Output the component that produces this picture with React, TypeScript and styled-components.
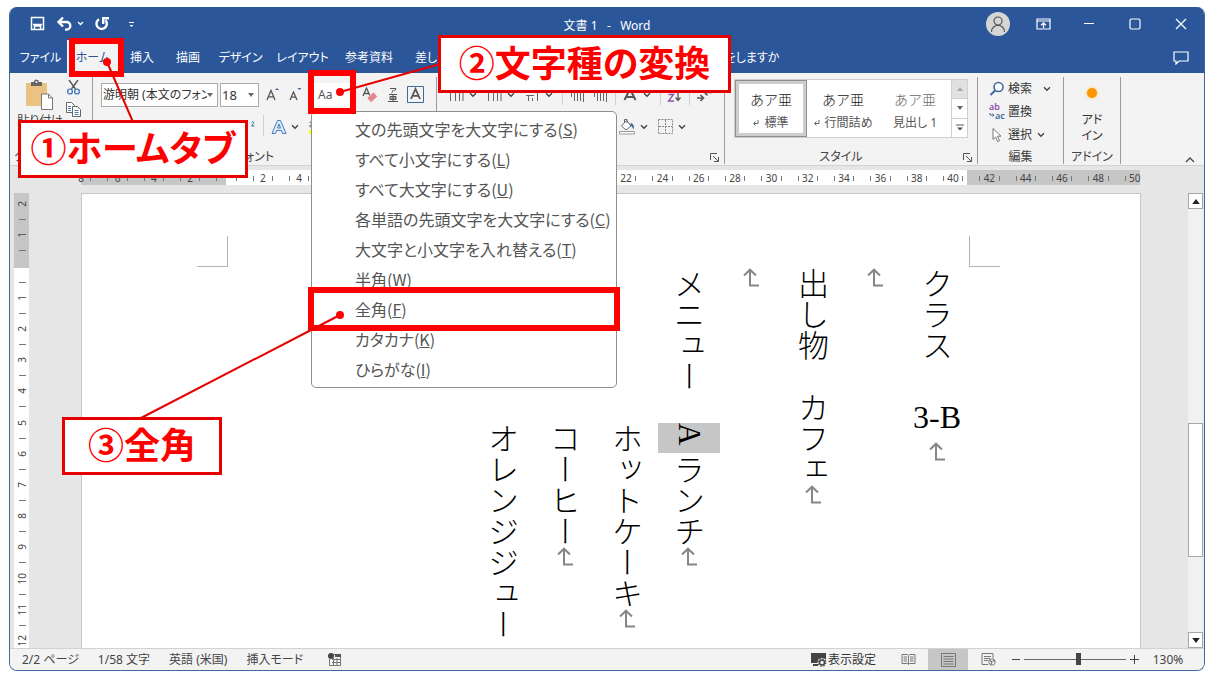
import React from "react";
import styled, { createGlobalStyle, css } from "styled-components";

const uiFont = `"Noto Sans", "Noto Sans CJK JP", sans-serif`;
const jpFont = `"Noto Sans CJK JP", sans-serif`;
const blue = "#2b579a";
const red = "#ff0000";

const GlobalStyle = createGlobalStyle`
  *, *::before, *::after { box-sizing: border-box; }
  body { margin: 0; background: #fff; font-family: ${uiFont}; font-size: 12px; color: #444; font-feature-settings: "palt"; }
  button, select, input { font: inherit; color: inherit; font-feature-settings: inherit; }
  button { border: 0; background: none; padding: 0; margin: 0; }
  svg { display: block; flex: none; }
`;

const Screen = styled.div`
  position: relative;
  display: flex;
  min-height: 100vh;
  padding: 7px 9px 6px;
`;

const Window = styled.div`
  flex: 1;
  min-width: 0;
  display: flex;
  flex-direction: column;
  border: 1px solid #41679f;
  border-top: 0;
  border-radius: 8px;
  background: #e6e6e6;
  overflow: hidden;
`;

/* ---------- title bar ---------- */

const TitleBar = styled.header`
  display: grid;
  grid-template-columns: 1fr auto 1fr;
  align-items: center;
  height: 33px;
  background: ${blue};
  color: #fff;
`;

const QuickAccess = styled.div`
  display: flex;
  align-items: center;
  gap: 9px;
  padding-left: 20px;
`;

const Title = styled.h1`
  margin: 0;
  padding-top: 4px;
  font-size: 12px;
  line-height: 16px;
  font-weight: 400;
  white-space: pre;
`;

const Caption = styled.div`
  display: flex;
  align-items: center;
  justify-content: flex-end;
`;

const CaptionButton = styled.button`
  display: grid;
  place-items: center;
  width: 46px;
  height: 32px;
`;

const Avatar = styled.button`
  display: grid;
  place-items: center;
  width: 24px;
  height: 24px;
  margin-right: 10px;
  border-radius: 50%;
  background: #d5d5d5;
  color: #555;
`;

/* ---------- tabs ---------- */

const TabBar = styled.nav`
  display: flex;
  align-items: stretch;
  height: 33px;
  padding-left: 4px;
  background: ${blue};
  color: #fff;
`;

const Tab = styled.button<{ $w: number; $active?: boolean }>`
  width: ${(p) => p.$w}px;
  padding-top: 2px;
  line-height: 16px;
  white-space: nowrap;
  ${(p) =>
    p.$active &&
    css`
      background: #f3f3f3;
      color: ${blue};
    `}
`;

const AssistButton = styled.button`
  width: 80px;
  margin-left: 209px;
  padding-top: 2px;
  line-height: 16px;
  white-space: nowrap;
`;

const CommentButton = styled.button`
  margin-left: auto;
  margin-right: 15px;
  padding-top: 2px;
`;

/* ---------- ribbon ---------- */

const Ribbon = styled.section`
  display: flex;
  height: 93px;
  padding: 4px 0 1px;
  background: #f3f3f3;
  border-bottom: 1px solid #d2d2d2;
`;

const Group = styled.div<{ $w: number }>`
  display: flex;
  flex-direction: column;
  width: ${(p) => p.$w}px;
  border-right: 1px solid #9b9b9b;
`;

const GroupBody = styled.div`
  flex: 1;
  min-height: 0;
  padding: 6px 8px 0;
`;

const GroupFooter = styled.div`
  display: flex;
  align-items: center;
  height: 14px;
  line-height: 14px;
`;

const GroupLabel = styled.span`
  flex: 1;
  display: flex;
  justify-content: center;
  min-width: 0;
  white-space: nowrap;
`;

const Launcher = styled.button`
  display: grid;
  place-items: center;
  width: 20px;
`;

const ToolRow = styled.div`
  display: flex;
  align-items: center;
  height: 23px;
  margin-bottom: 9px;
`;

const ToolButton = styled.button`
  display: grid;
  place-items: center;
  width: 23px;
  height: 23px;
  line-height: 16px;
  flex: none;
`;

const Split = styled.div`
  display: flex;
  align-items: center;
  padding-right: 5px;
`;

const Arrow = styled.button`
  display: grid;
  place-items: center;
  width: 10px;
  height: 23px;
`;

const Sep = styled.span`
  width: 1px;
  height: 21px;
  margin: 0 3px;
  background: #d0d0d0;
`;

const Push = styled.div<{ $end: number }>`
  display: flex;
  margin-left: auto;
  padding-right: ${(p) => p.$end}px;
`;

const ComboBox = styled.div<{ $w: number }>`
  display: flex;
  align-items: center;
  width: ${(p) => p.$w}px;
  height: 24px;
  margin-right: 2px;
  padding-right: 4px;
  border: 1px solid #ababab;
  background: #fff;
  flex: none;
`;

const Combo = styled.select<{ $size: number }>`
  appearance: none;
  flex: 1;
  min-width: 0;
  height: 22px;
  padding: 0 0 0 1px;
  border: 0;
  background: transparent;
  color: #333;
  font-size: ${(p) => p.$size}px;
`;

const ClipboardBody = styled.div`
  flex: 1;
  display: flex;
  gap: 6px;
  padding: 2px 0 0 10px;
  min-height: 0;
`;

const PasteButton = styled.button`
  display: flex;
  flex-direction: column;
  align-items: center;
  gap: 2px;
  width: 40px;
  line-height: 16px;
  white-space: nowrap;
`;

const ClipTools = styled.div`
  display: flex;
  flex-direction: column;
  gap: 7px;
  padding-top: 1px;
`;

const MenuAnchor = styled.div`
  position: relative;
  width: 45px;
  margin: 0 2px 0 4px;
  display: flex;
`;

const CaseButton = styled.button`
  width: 45px;
  height: 23px;
  padding-left: 7px;
  background: #fff;
  color: #555;
  text-align: left;
`;

const Menu = styled.div`
  position: absolute;
  z-index: 5;
  top: 28px;
  left: 0;
  width: 306px;
  padding: 2px 0 3px;
  background: #fff;
  border: 1px solid #8f8f8f;
  border-radius: 5px;
`;

const MenuItem = styled.button`
  display: block;
  width: 100%;
  height: 30px;
  padding-left: 43px;
  color: #555;
  font-family: ${jpFont};
  font-size: 16px;
  line-height: 30px;
  text-align: left;
  white-space: nowrap;
`;

const Gallery = styled.div`
  display: flex;
  height: 59px;
  margin: 2px 9px 0;
  background: #fff;
  border: 1px solid #cfcfcf;
`;

const StyleCard = styled.button<{ $active?: boolean }>`
  width: 72px;
  display: flex;
  flex-direction: column;
  align-items: center;
  gap: 6px;
  padding-top: 9px;
  white-space: nowrap;
  ${(p) =>
    p.$active &&
    css`
      box-shadow: inset 0 0 0 1px #8f8f8f, inset 0 0 0 4px #cdcdcd;
    `}
`;

const Sample = styled.span<{ $light?: boolean }>`
  font-family: ${jpFont};
  font-size: 14px;
  line-height: 20px;
  font-weight: 300;
  font-feature-settings: normal;
  color: ${(p) => (p.$light ? "#666" : "#111")};
`;

const StyleName = styled.span`
  display: flex;
  align-items: center;
  gap: 5px;
  line-height: 16px;
  color: #555;
`;

const GallerySide = styled.div`
  flex: 1;
  display: flex;
  flex-direction: column;
  border-left: 1px solid #cfcfcf;
`;

const SideButton = styled.button<{ $off?: boolean }>`
  flex: 1;
  display: grid;
  place-items: center;
  background: ${(p) => (p.$off ? "#e1e1e1" : "#fff")};
  & + & {
    border-top: 1px solid #cfcfcf;
  }
`;

const EditBody = styled.div`
  flex: 1;
  display: flex;
  flex-direction: column;
  padding-left: 11px;
`;

const EditButton = styled.button<{ $gap: number }>`
  display: flex;
  align-items: center;
  height: 23px;
  width: 70px;
  line-height: 16px;
  color: #333;
  & > svg:first-child {
    margin-right: 2px;
    overflow: visible;
  }
  & > svg + svg,
  & > span + svg {
    margin-left: ${(p) => p.$gap}px;
  }
`;

const AddinButton = styled.button`
  flex: 1;
  display: flex;
  flex-direction: column;
  align-items: center;
  justify-content: flex-end;
  line-height: 16px;
  padding-bottom: 6px;
  color: #333;
`;

const Dot = styled.span`
  width: 10px;
  height: 10px;
  margin-bottom: 14px;
  border-radius: 50%;
  background: #ff9500;
  box-shadow: 0 0 2px 1px #ffd9a0;
`;

const CollapseButton = styled.button`
  align-self: flex-end;
  margin: 0 9px 1px auto;
`;

/* ---------- rulers and page ---------- */

const TopRuler = styled.div`
  display: flex;
  height: 15px;
  margin: 4px 64px 8px 71px;
  background: linear-gradient(
    to right,
    #c6c6c6 145px,
    #fff 145px calc(100% - 173px),
    #c6c6c6 calc(100% - 173px)
  );
`;

const TopScale = styled.div`
  flex: 1;
  display: flex;
  margin: 0 -13px 0 -18px;
`;

const tick = css`
  content: "";
  background: #777;
`;

const TopCell = styled.span`
  flex: 1 1 0;
  display: flex;
  align-items: center;
  justify-content: space-between;
  padding: 1px 8px 0;
  font-size: 10px;
  line-height: 12px;
  &::before {
    ${tick}
    width: 1px;
    height: 5px;
  }
  &::after {
    ${tick}
    width: 1px;
    height: 5px;
  }
  &:first-child::before,
  &:last-child::after {
    visibility: hidden;
  }
`;

const Workspace = styled.main`
  flex: 1;
  display: flex;
  padding-left: 4px;
  min-height: 455px;
`;

const SideRuler = styled.div`
  display: flex;
  width: 15px;
  overflow: hidden;
  background: linear-gradient(to bottom, #c6c6c6 75px, #fff 75px);
`;

const SideScale = styled.div`
  flex: 1;
  display: flex;
  flex-direction: column;
  margin: -4px 0 -9px;
`;

const SideCell = styled.span`
  flex: 1 1 0;
  display: flex;
  flex-direction: column;
  align-items: center;
  justify-content: center;
  border-image: linear-gradient(to right, transparent 5px, #777 5px 11px, transparent 11px) 1;
  border-bottom: 1px solid;
`;

const SideDigit = styled.span`
  writing-mode: vertical-rl;
  transform: rotate(180deg);
  font-size: 10px;
  line-height: 12px;
`;

const Page = styled.article`
  flex: 1;
  min-width: 0;
  display: flex;
  flex-direction: column;
  margin: 0 47px 0 52px;
  padding-top: 42px;
  background: #fff;
  border: 1px solid #c6c6c6;
  border-bottom: 0;
`;

const CropRow = styled.div`
  display: flex;
  justify-content: space-between;
  padding: 0 140px 0 115px;
`;

const CropMark = styled.span<{ $side: "left" | "right" }>`
  width: 31px;
  height: 31px;
  border-bottom: 1px solid #b4b4b4;
  ${(p) => (p.$side === "left" ? "border-right" : "border-left")}: 1px solid #b4b4b4;
`;

const TextArea = styled.div`
  flex: 1;
  writing-mode: vertical-rl;
  margin: 1px 172px 0 0;
  color: #000;
  font-family: "Noto Sans CJK JP", serif;
  font-size: 31px;
  font-weight: 300;
  line-height: 62px;
  font-feature-settings: normal;
`;

const Paragraph = styled.p<{ $indent?: boolean }>`
  display: flex;
  align-items: center;
  width: 62px;
  margin: 0;
  padding-top: ${(p) => (p.$indent ? 155 : 0)}px;
  white-space: pre;
`;

const Across = styled.span`
  writing-mode: horizontal-tb;
  font-family: "Liberation Serif", serif;
  font-size: 32px;
  line-height: 36px;
  margin: 7px 0;
`;

const Selected = styled.mark`
  height: 30px;
  margin-bottom: 1px;
  background: #c6c6c6;
  color: inherit;
  font-family: "Liberation Serif", serif;
`;

const ScrollBar = styled.div`
  display: flex;
  flex-direction: column;
  width: 15px;
  margin-right: 1px;
  background: #f1f1f1;
`;

const ScrollButton = styled.button`
  display: grid;
  place-items: center;
  height: 16px;
  background: #fff;
  border: 1px solid #a6a6a6;
`;

const ScrollTrack = styled.div`
  flex: 1;
  display: flex;
  flex-direction: column;
  padding: 214px 0 75px;
`;

const ScrollThumb = styled.div`
  flex: 1;
  background: #fff;
  border: 1px solid #a6a6a6;
`;

/* ---------- status bar ---------- */

const StatusBar = styled.footer`
  display: flex;
  align-items: stretch;
  height: 22px;
  background: #f3f3f3;
  border-top: 1px solid #d2d2d2;
  line-height: 20px;
`;

const StatusInfo = styled.div`
  flex: 1;
  display: flex;
  align-items: center;
  gap: 19px;
  padding-left: 12px;
`;

const StatusIcon = styled.button`
  margin-left: 6px;
`;

const DisplayButton = styled.button`
  display: flex;
  align-items: center;
  gap: 1px;
  width: 77px;
  color: #333;
`;

const ViewButton = styled.button<{ $active?: boolean }>`
  display: grid;
  place-items: center;
  width: 40px;
  background: ${(p) => (p.$active ? "#c6c6c6" : "transparent")};
`;

const ZoomButton = styled.button`
  display: grid;
  place-items: center;
  width: 16px;
`;

const ZoomRange = styled.input`
  appearance: none;
  width: 102px;
  height: 20px;
  margin: 0;
  background: linear-gradient(#666, #666) center / 100% 1px no-repeat;
  &::-webkit-slider-thumb {
    appearance: none;
    width: 5px;
    height: 12px;
    background: #444;
  }
`;

const ZoomValue = styled.button`
  width: 62px;
  padding-right: 10px;
  text-align: center;
`;

/* ---------- tutorial notes over the window ---------- */

const Lines = styled.svg`
  position: absolute;
  z-index: 10;
  top: 0;
  left: 0;
  width: 100%;
  height: 100%;
  pointer-events: none;
`;

const Frame = styled.div<{ $x: number; $y: number; $w: number; $h: number }>`
  position: absolute;
  z-index: 9;
  left: ${(p) => p.$x}px;
  top: ${(p) => p.$y}px;
  width: ${(p) => p.$w}px;
  height: ${(p) => p.$h}px;
  border: 6px solid ${red};
  pointer-events: none;
`;

const Callout = styled.div<{ $x: number; $y: number; $w: number }>`
  position: absolute;
  z-index: 11;
  left: ${(p) => p.$x}px;
  top: ${(p) => p.$y}px;
  width: ${(p) => p.$w}px;
  height: 58px;
  border: 3px solid #e60000;
  background: #fff;
  color: ${red};
  font-family: ${jpFont};
  font-size: 36px;
  font-weight: 700;
  line-height: 46px;
  text-align: center;
  white-space: nowrap;
`;

/* ---------- drawings ---------- */

type IconProps = { w: number; h: number; children: React.ReactNode; color?: string; sw?: number };
const Icon = ({ w, h, children, color = "currentColor", sw = 1 }: IconProps) => (
  <svg width={w} height={h} viewBox={`0 0 ${w} ${h}`} fill="none" stroke={color} strokeWidth={sw} aria-hidden="true">
    {children}
  </svg>
);

const Chevron = ({ color = "#444" }: { color?: string }) => (
  <Icon w={8} h={6} color={color} sw={1.4}>
    <path d="M1 1.2 4 4.2 7 1.2" />
  </Icon>
);

const Triangle = ({ up, color = "#666", big }: { up?: boolean; color?: string; big?: boolean }) => (
  <svg width={big ? 8 : 6} height={big ? 5 : 4} viewBox="0 0 6 4" aria-hidden="true">
    <path d={up ? "M0 4h6L3 0z" : "M0 0h6L3 4z"} fill={color} />
  </svg>
);

const LauncherIcon = () => (
  <Icon w={9} h={9} color="#555">
    <path d="M.5 7V.5H7M3 3l5 5M8.5 4v4.5H4" />
  </Icon>
);

const ReturnMark = () => (
  <Icon w={18} h={19} color="#868686" sw={2}>
    <path d="M2 7.5 8 1.7l6 5.8M8 2v15.5h9" />
  </Icon>
);

const VerticalLines = ({ dense }: { dense?: boolean }) => (
  <Icon w={15} h={16} color="#666">
    {dense ? (
      <path d="M1.5 4v6M4.5 3v11M7.5 5v9M10.5 3v11M13.5 3v12" />
    ) : (
      <path d="M1.5 2v12M6.5 2v12M10.5 2v12M14 2v12" />
    )}
  </Icon>
);

const AlignIcon = () => (
  <Icon w={14} h={12} color="#666">
    <path d="M1.5 0v12M5.5 0v8M9.5 0v12M13 0v8" />
  </Icon>
);

const SplitTool = ({ label, children }: { label: string; children: React.ReactNode }) => (
  <Split>
    <ToolButton aria-label={label}>{children}</ToolButton>
    <Arrow aria-label={`${label} その他`}>
      <Chevron />
    </Arrow>
  </Split>
);

const menuItems: [string, string][] = [
  ["文の先頭文字を大文字にする", "S"],
  ["すべて小文字にする", "L"],
  ["すべて大文字にする", "U"],
  ["各単語の先頭文字を大文字にする", "C"],
  ["大文字と小文字を入れ替える", "T"],
  ["半角", "W"],
  ["全角", "F"],
  ["カタカナ", "K"],
  ["ひらがな", "I"],
];

const tabs: [string, number][] = [
  ["ファイル", 53],
  ["ホーム", 52],
  ["挿入", 46],
  ["描画", 46],
  ["デザイン", 59],
  ["レイアウト", 65],
  ["参考資料", 68],
  ["差し込み文書", 94],
];

const topNumbers = Array.from({ length: 30 }, (_, i) => Math.abs(i * 2 - 8));
const sideNumbers = Array.from({ length: 15 }, (_, i) => Math.abs(i - 2));

const LauncherFooter = ({ label, children }: { label: string; children?: React.ReactNode }) => (
  <GroupFooter>
    <GroupLabel>{children}</GroupLabel>
    <Launcher aria-label={`${label}の設定`}>
      <LauncherIcon />
    </Launcher>
  </GroupFooter>
);

export default function App() {
  return (
    <Screen>
      <GlobalStyle />
      <Window>
        <TitleBar>
          <QuickAccess>
            <button aria-label="上書き保存">
              <Icon w={15} h={15} sw={1.5}>
                <path d="M1.5 1.5h12v12h-12z" />
                <path d="M3 8.5h9M4.5 13v-3h6v3" />
              </Icon>
            </button>
            <button aria-label="元に戻す">
              <Icon w={31} h={16} sw={2.4}>
                <path d="M9 1.500 4.500 6 9 10.500M5 6h7.500a3.800 3.800 0 0 1 0 7.600H11" />
                <path d="m24 6 2.500 2.500L29 6" strokeWidth="1.300" />
              </Icon>
            </button>
            <button aria-label="やり直し">
              <Icon w={22} h={16} sw={2.4}>
                <path d="M5 3.200a5.200 5.200 0 1 0 6.500 1M15 2.200H9.200V8" />
              </Icon>
            </button>
            <button aria-label="クイック アクセスのカスタマイズ">
              <Icon w={22} h={8}>
                <path d="M4 2.500h5" />
                <path d="M4.500 5h4l-2 2z" fill="#fff" stroke="none" />
              </Icon>
            </button>
          </QuickAccess>
          <Title>{"文書 1   -   Word"}</Title>
          <Caption>
            <Avatar aria-label="アカウント">
              <Icon w={16} h={18} sw={1.2}>
                <circle cx="8" cy="6" r="4" />
                <path d="M1.500 17c0-9 13-9 13 0" />
              </Icon>
            </Avatar>
            <CaptionButton aria-label="リボンの表示オプション">
              <Icon w={15} h={12} sw={1.2}>
                <path d="M1 1h13v10H1zM1 3h13M7.500 10V5M5 7.200 7.500 4.800 10 7.200" />
              </Icon>
            </CaptionButton>
            <CaptionButton aria-label="最小化">
              <Icon w={12} h={12}>
                <path d="M1 5.500h10" />
              </Icon>
            </CaptionButton>
            <CaptionButton aria-label="最大化">
              <Icon w={12} h={12} sw={1.2}>
                <rect x="1" y="1" width="10" height="10" rx="1.500" />
              </Icon>
            </CaptionButton>
            <CaptionButton aria-label="閉じる">
              <Icon w={12} h={12} sw={1.2}>
                <path d="m1 1 10 10M11 1 1 11" />
              </Icon>
            </CaptionButton>
          </Caption>
        </TitleBar>

        <TabBar>
          {tabs.map(([name, w]) => (
            <Tab key={name} $w={w} $active={name === "ホーム"}>
              {name}
            </Tab>
          ))}
          <AssistButton>何をしますか</AssistButton>
          <CommentButton aria-label="コメント">
            <Icon w={16} h={14} sw={1.2}>
              <path d="M1 1h14v9H6l-3 3v-3H1z" />
            </Icon>
          </CommentButton>
        </TabBar>

        <Ribbon>
          <Group $w={83}>
            <ClipboardBody>
              <PasteButton>
                <Icon w={30} h={32}>
                  <path d="M1 4h21v23H1z" fill="#eac282" stroke="none" />
                  <path d="M6 7V3h3a2.500 2.500 0 0 1 5 0h3v4z" fill="#666" stroke="none" />
                  <circle cx="11.500" cy="3" r="1" fill="#fff" stroke="none" />
                  <path d="M16.500 15h7l4 4v11.500h-11z" fill="#fff" stroke="#777" />
                  <path d="M23.500 15v4h4" stroke="#777" />
                </Icon>
                貼り付け
              </PasteButton>
              <ClipTools>
                <button aria-label="切り取り">
                  <Icon w={15} h={15} color="#555" sw={1.4}>
                    <path d="m3 0 6.500 9M12 0 5.500 9" />
                    <circle cx="4" cy="11.500" r="2.400" stroke="#4a7dbd" />
                    <circle cx="11" cy="11.500" r="2.400" stroke="#4a7dbd" />
                  </Icon>
                </button>
                <button aria-label="コピー">
                  <Icon w={15} h={15} color="#666">
                    <path d="M.5.5h5l3 3v7h-8z" fill="#fff" />
                    <path d="M6.500 4.500h5l3 3v7h-8z" fill="#fff" />
                    <path d="M8.500 8.500h4M8.500 10.500h4M8.500 12.500h4M2 4.500h3M2 6.500h3M2 8.500h3" stroke="#4a7dbd" />
                  </Icon>
                </button>
              </ClipTools>
            </ClipboardBody>
            <GroupFooter>
              <GroupLabel>クリップボード</GroupLabel>
            </GroupFooter>
          </Group>

          <Group $w={344}>
            <GroupBody>
              <ToolRow>
                <ComboBox $w={117}>
                  <Combo $size={12} aria-label="フォント名">
                    <option>游明朝 (本文のフォント)</option>
                  </Combo>
                  <Triangle />
                </ComboBox>
                <ComboBox $w={39}>
                  <Combo $size={13} aria-label="フォント サイズ">
                    <option>18</option>
                  </Combo>
                  <Triangle />
                </ComboBox>
                <ToolButton aria-label="フォント サイズの拡大">
                  <Icon w={14} h={16} color="#555" sw={1.3}>
                    <path d="m1 13 4-9.500L9 13M2.500 9.800h5" />
                    <path d="m9 3 2-2 2 2z" fill="#41699f" stroke="none" />
                  </Icon>
                </ToolButton>
                <ToolButton aria-label="フォント サイズの縮小">
                  <Icon w={14} h={16} color="#555" sw={1.3}>
                    <path d="m1 13 3.500-8L8 13M2.300 10.200h4.400" />
                    <path d="m8.500 1 2 2 2-2z" fill="#41699f" stroke="none" />
                  </Icon>
                </ToolButton>
                <MenuAnchor>
                  <CaseButton aria-haspopup="menu" aria-expanded="true">
                    Aa
                  </CaseButton>
                  <Menu role="menu">
                    {menuItems.map(([text, key]) => (
                      <MenuItem role="menuitem" key={key}>
                        {text}(<u>{key}</u>)
                      </MenuItem>
                    ))}
                  </Menu>
                </MenuAnchor>
                <ToolButton aria-label="書式のクリア">
                  <Icon w={16} h={16} color="#555" sw={1.3}>
                    <path d="m1 9 3.500-8L8 9M2.300 6.500h4.400" />
                    <path d="m5 11 6.500-6 4 4.500L9 15.500z" fill="#e8868f" stroke="#f3f3f3" strokeWidth=".6" />
                  </Icon>
                </ToolButton>
                <ToolButton aria-label="ルビ">
                  <Icon w={12} h={16} color="#555">
                    <path d="M3 1.500h6L7.500 4M6 3c0 1.500-.5 2.500-1.500 3M2 7.500h8M6 7.500v7M3 9.500h6v3H3zM3 11h6M1 14.500h10" />
                  </Icon>
                </ToolButton>
                <ToolButton aria-label="囲み線">
                  <Icon w={17} h={17} color="#555" sw={1.5}>
                    <path d="M.5.5h16v16H.5z" stroke="#41699f" strokeWidth="1" />
                    <path d="m4 13 4.500-10L13 13M5.500 9.800h6" strokeWidth="1.800" />
                  </Icon>
                </ToolButton>
              </ToolRow>
              <ToolRow>
                <Push $end={85}>
                  <ToolButton aria-label="上付き">
                    <Icon w={15} h={12} color="#41699f">
                      <path d="m1 5 6 7M7 5l-6 7" stroke="#555" />
                      <path d="M10.500 1.500c1-1.500 3-.5 2 1l-2 2.500h3" />
                    </Icon>
                  </ToolButton>
                  <Sep />
                  <SplitTool label="文字の効果">
                    <Icon w={16} h={16} color="#4a7dbd">
                      <path d="M6.500 1.500h3L15 14.500h-3.500l-1-3h-5l-1 3H1zM6.500 9h3L8 5z" fill="#dcebfa" />
                    </Icon>
                  </SplitTool>
                  <SplitTool label="蛍光ペン">
                    <Icon w={16} h={16} color="#555">
                      <path d="M.5 3.500c2-1 3.500 0 3.500 1V8M4 5.500c-3-.5-4.500 2.500-2 2.500l2-1M7.500 1v7" />
                      <path d="M0 11h16v4H0z" fill="#ff0" stroke="none" />
                    </Icon>
                  </SplitTool>
                </Push>
              </ToolRow>
            </GroupBody>
            <LauncherFooter label="フォント">フォント</LauncherFooter>
          </Group>

          <Group $w={288}>
            <GroupBody>
              <ToolRow>
                <SplitTool label="箇条書き">
                  <VerticalLines />
                </SplitTool>
                <SplitTool label="段落番号">
                  <VerticalLines />
                </SplitTool>
                <SplitTool label="アウトライン">
                  <Icon w={15} h={16} color="#666">
                    <path d="M1 8.500h8M3.500 8v6M7.500 11v3M12.500 2v12" />
                  </Icon>
                </SplitTool>
                <Sep />
                <ToolButton aria-label="インデントを減らす">
                  <VerticalLines dense />
                </ToolButton>
                <ToolButton aria-label="インデントを増やす">
                  <VerticalLines dense />
                </ToolButton>
                <Sep />
                <SplitTool label="拡張書式">
                  <Icon w={16} h={16} color="#555" sw={2}>
                    <path d="M1 2h14M2.500 13 8 2l5.500 11M4.500 10h7" />
                  </Icon>
                </SplitTool>
                <Sep />
                <ToolButton aria-label="並べ替え">
                  <Icon w={15} h={16} color="#8a50a8" sw={1.3}>
                    <path d="M1.500 7.500h5L1.500 14h5.500" />
                    <path d="M11 1v12.500M8.500 10.500l2.500 3 2.500-3" stroke="#555" />
                  </Icon>
                </ToolButton>
                <Sep />
                <ToolButton aria-label="編集記号">
                  <Icon w={15} h={16} color="#555" sw={1.6}>
                    <path d="M15 5.500H8M10.500 2.500l-3 3 3 3M0 11h6M3.500 8l3 3-3 3" />
                  </Icon>
                </ToolButton>
              </ToolRow>
              <ToolRow>
                {["上揃え", "中央揃え", "下揃え", "両端揃え", "均等割り付け"].map((n) => (
                  <ToolButton key={n} aria-label={n}>
                    <AlignIcon />
                  </ToolButton>
                ))}
                <Push $end={24}>
                  <SplitTool label="塗りつぶし">
                    <Icon w={17} h={17} color="#666">
                      <path d="m2.500 8 5-5.500L12 8l-5 4zM5.500 5V1.500h2.500V5" fill="#fff" />
                      <path d="M11.500 5c3 .5 4 3 3 6.500-1-2-1.500-3-3-4z" fill="#41699f" stroke="none" />
                      <path d="M.5 13.500h15v2.500H.5z" fill="#fff" stroke="#999" />
                    </Icon>
                  </SplitTool>
                  <SplitTool label="罫線">
                    <Icon w={15} h={15} color="#888">
                      <path d="M.5.5h14v14H.5zM7.500 1v13M1 7.500h13" strokeDasharray="2 1" />
                    </Icon>
                  </SplitTool>
                </Push>
              </ToolRow>
            </GroupBody>
            <LauncherFooter label="段落" />
          </Group>

          <Group $w={253}>
            <Gallery>
              <StyleCard $active>
                <Sample>あア亜</Sample>
                <StyleName>
                  <Icon w={6} h={6} color="#666">
                    <path d="M5 0v3.500H1M2.500 1.500l-2 2 2 2" />
                  </Icon>
                  標準
                </StyleName>
              </StyleCard>
              <StyleCard>
                <Sample>あア亜</Sample>
                <StyleName>
                  <Icon w={6} h={6} color="#666">
                    <path d="M5 0v3.500H1M2.500 1.500l-2 2 2 2" />
                  </Icon>
                  行間詰め
                </StyleName>
              </StyleCard>
              <StyleCard>
                <Sample $light>あア亜</Sample>
                <StyleName>見出し 1</StyleName>
              </StyleCard>
              <GallerySide>
                <SideButton $off aria-label="上へ">
                  <Triangle up color="#aaa" />
                </SideButton>
                <SideButton aria-label="下へ">
                  <Triangle />
                </SideButton>
                <SideButton aria-label="スタイル一覧">
                  <Icon w={8} h={8} color="#555">
                    <path d="M0 1h8" />
                    <path d="M1 3.500h6l-3 3z" fill="#555" stroke="none" />
                  </Icon>
                </SideButton>
              </GallerySide>
            </Gallery>
            <GroupBody />
            <LauncherFooter label="スタイル">スタイル</LauncherFooter>
          </Group>

          <Group $w={86}>
            <EditBody>
              <EditButton $gap={11}>
                <Icon w={17} h={16} color="#41699f" sw={1.6}>
                  <circle cx="9.500" cy="6" r="4.500" fill="#fff" />
                  <path d="M6.300 9.300 1.500 14" strokeWidth="2" />
                </Icon>
                <span>検索</span>
                <Chevron />
              </EditButton>
              <EditButton $gap={0}>
                <svg width="17" height="17" viewBox="0 0 17 17" aria-hidden="true">
                  <text x="0" y="7" fontSize="9" fontWeight="600" fill="#8a50a8">ab</text>
                  <text x="6" y="16" fontSize="9" fontWeight="600" fill="#41699f">ac</text>
                  <path d="M1 10v2h4M3.500 10.500 5 12l-1.500 1.500" fill="none" stroke="#41699f" />
                </svg>
                <span>置換</span>
              </EditButton>
              <EditButton $gap={5}>
                <Icon w={17} h={16} color="#777">
                  <path d="M4 1.500v11l2.600-2.500 1.900 4.500 2-.8-2-4.500H12z" fill="#fff" />
                </Icon>
                <span>選択</span>
                <Chevron />
              </EditButton>
            </EditBody>
            <GroupFooter>
              <GroupLabel>編集</GroupLabel>
            </GroupFooter>
          </Group>

          <Group $w={57}>
            <AddinButton>
              <Dot />
              <span>アド</span>
              <span>イン</span>
            </AddinButton>
            <GroupFooter>
              <GroupLabel>アドイン</GroupLabel>
            </GroupFooter>
          </Group>
          <CollapseButton aria-label="リボンを折りたたむ">
            <Icon w={10} h={7} color="#444" sw={1.3}>
              <path d="M1 6 5 2l4 4" />
            </Icon>
          </CollapseButton>
        </Ribbon>

        <TopRuler>
          <TopScale>
            {topNumbers.map((n, i) => (
              <TopCell key={i}>{n === 0 ? "" : n}</TopCell>
            ))}
          </TopScale>
        </TopRuler>

        <Workspace>
          <SideRuler>
            <SideScale>
              {sideNumbers.map((n, i) => (
                <SideCell key={i}>
                  <SideDigit>{n === 0 ? "" : n}</SideDigit>
                </SideCell>
              ))}
            </SideScale>
          </SideRuler>
          <Page>
            <CropRow>
              <CropMark $side="left" />
              <CropMark $side="right" />
            </CropRow>
            <TextArea>
              <Paragraph>
                {"クラス　"}
                <Across>3-B</Across>
                <ReturnMark />
              </Paragraph>
              <Paragraph>
                <ReturnMark />
              </Paragraph>
              <Paragraph>
                {"出し物　カフェ"}
                <ReturnMark />
              </Paragraph>
              <Paragraph>
                <ReturnMark />
              </Paragraph>
              <Paragraph>
                {"メニュー　"}
                <Selected>A</Selected>
                {"ランチ"}
                <ReturnMark />
              </Paragraph>
              <Paragraph $indent>
                {"ホットケーキ"}
                <ReturnMark />
              </Paragraph>
              <Paragraph $indent>
                {"コーヒー"}
                <ReturnMark />
              </Paragraph>
              <Paragraph $indent>{"オレンジジュー"}</Paragraph>
            </TextArea>
          </Page>
          <ScrollBar>
            <ScrollButton aria-label="上へスクロール">
              <Triangle up big color="#222" />
            </ScrollButton>
            <ScrollTrack>
              <ScrollThumb />
            </ScrollTrack>
            <ScrollButton aria-label="下へスクロール">
              <Triangle big color="#222" />
            </ScrollButton>
          </ScrollBar>
        </Workspace>

        <StatusBar>
          <StatusInfo>
            <span>2/2 ページ</span>
            <span>1/58 文字</span>
            <span>英語 (米国)</span>
            <span>挿入モード</span>
            <StatusIcon aria-label="マクロの記録">
              <Icon w={13} h={13} color="#777">
                <path d="M5 1.500h7.500v11h-11V6M4 6.500h8M4 9.500h8M5.500 5v7M9 5v7" />
                <path d="M7 1h6v3H7z" fill="#555" stroke="none" />
                <circle cx="3" cy="3" r="3" fill="#444" stroke="none" />
              </Icon>
            </StatusIcon>
          </StatusInfo>
          <DisplayButton>
            <Icon w={16} h={14} color="#444">
              <path d="M0 0h15v10H0zM2 11h5v2H2z" fill="#444" stroke="none" />
              <circle cx="11" cy="9.500" r="4.500" fill="#f3f3f3" stroke="none" />
              <circle cx="11" cy="9.500" r="2.500" strokeWidth="1.400" />
              <circle cx="11" cy="9.500" r="3.800" strokeDasharray="1.500 1.480" strokeWidth="1.200" />
            </Icon>
            表示設定
          </DisplayButton>
          <ViewButton aria-label="閲覧モード">
            <Icon w={15} h={13} color="#777">
              <path d="M1 1.500h5.500l1 1 1-1H14v9H8.500l-1 1-1-1H1zM7.500 2.500v9M2.500 4h3.500M2.500 6h3.500M2.500 8h3.500M9 4h3.500M9 6h3.500M9 8h3.500" />
            </Icon>
          </ViewButton>
          <ViewButton $active aria-label="印刷レイアウト">
            <Icon w={15} h={14} color="#777">
              <path d="M.5.5h14v13H.5zM2.500 3.500h10M2.500 6h10M2.500 8.500h10M2.500 11h10" />
            </Icon>
          </ViewButton>
          <ViewButton aria-label="Web レイアウト">
            <Icon w={15} h={13} color="#777">
              <path d="M7 11.500H1V.5h11V5M3 3.500h7M3 5.500h6M3 7.500h4" />
              <circle cx="11" cy="9" r="3.200" fill="#fff" />
              <path d="m9 7.500 2 1.500-1 2.500M12 6.500l1.500 2" strokeWidth="1.400" />
            </Icon>
          </ViewButton>
          <ZoomButton aria-label="縮小">
            <Icon w={9} h={9} color="#444">
              <path d="M0 4.500h8" />
            </Icon>
          </ZoomButton>
          <ZoomRange type="range" aria-label="ズーム" min={0} max={100} defaultValue={54} />
          <ZoomButton aria-label="拡大">
            <Icon w={9} h={9} color="#444">
              <path d="M0 4.500h9M4.500 0v9" />
            </Icon>
          </ZoomButton>
          <ZoomValue>130%</ZoomValue>
        </StatusBar>
      </Window>

      <Frame $x={69} $y={38} $w={55} $h={39} />
      <Frame $x={308} $y={70} $w={48} $h={44} />
      <Frame $x={308} $y={287} $w={312} $h={44} />
      <Lines aria-hidden="true" stroke="#e60000" strokeWidth="2" fill={red}>
        <path d="M107 62l26 60M340 92l100-28M340 315 141 418" />
        <g stroke="none">
          <circle cx="107" cy="62" r="4" />
          <circle cx="340" cy="92" r="4" />
          <circle cx="340" cy="315" r="4" />
        </g>
      </Lines>
      <Callout $x={18} $y={120} $w={230}>①ホームタブ</Callout>
      <Callout $x={438} $y={35} $w={293}>②文字種の変換</Callout>
      <Callout $x={62} $y={417} $w={160}>③全角</Callout>
    </Screen>
  );
}
